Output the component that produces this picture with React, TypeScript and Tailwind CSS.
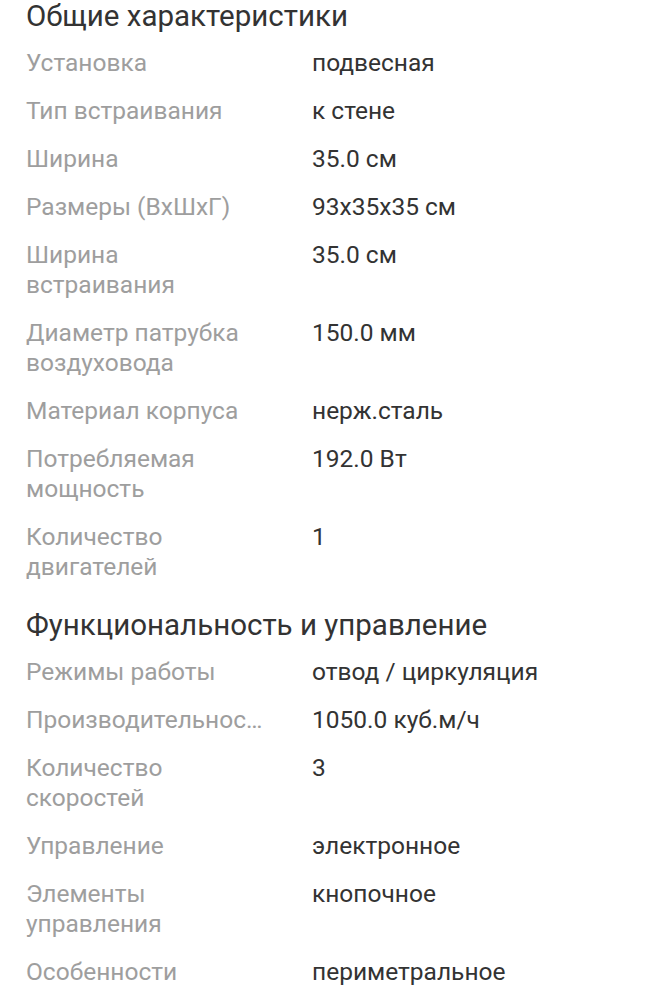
import React from 'react';

// ============================================
// Types
// ============================================

interface SpecRow {
  label: string;
  value: string;
  truncate?: boolean;
}

interface SpecSection {
  title: string;
  rows: SpecRow[];
}

// ============================================
// Data
// ============================================

const sections: SpecSection[] = [
  {
    title: 'Общие характеристики',
    rows: [
      { label: 'Установка', value: 'подвесная' },
      { label: 'Тип встраивания', value: 'к стене' },
      { label: 'Ширина', value: '35.0 см' },
      { label: 'Размеры (ВхШхГ)', value: '93x35x35 см' },
      { label: 'Ширина встраивания', value: '35.0 см' },
      { label: 'Диаметр патрубка воздуховода', value: '150.0 мм' },
      { label: 'Материал корпуса', value: 'нерж.сталь' },
      { label: 'Потребляемая мощность', value: '192.0 Вт' },
      { label: 'Количество двигателей', value: '1' },
    ],
  },
  {
    title: 'Функциональность и управление',
    rows: [
      { label: 'Режимы работы', value: 'отвод / циркуляция' },
      { label: 'Производительность', value: '1050.0 куб.м/ч', truncate: true },
      { label: 'Количество скоростей', value: '3' },
      { label: 'Управление', value: 'электронное' },
      { label: 'Элементы управления', value: 'кнопочное' },
      { label: 'Особенности', value: 'периметральное' },
    ],
  },
];

// ============================================
// Components
// ============================================

const SpecItem: React.FC<{ row: SpecRow }> = ({ row }) => (
  <div className="flex py-[9px] text-[24.5px] leading-[30px]">
    <div
      className={`w-[240px] shrink-0 text-[#9e9e9e] ${row.truncate ? 'truncate' : ''}`.trim()}
    >
      {row.label}
    </div>
    <div className="ml-[46px] text-[#333333]">{row.value}</div>
  </div>
);

const Section: React.FC<{ section: SpecSection; first?: boolean }> = ({ section, first }) => (
  <section className={first ? '' : 'mt-[18px]'}>
    <h2 className="h-[39px] pb-[7px] text-[29.5px] leading-[32px] text-[#333333]">
      {section.title}
    </h2>
    {section.rows.map((row) => (
      <SpecItem key={row.label} row={row} />
    ))}
  </section>
);

export default function App() {
  return (
    <div
      className="min-h-screen bg-white pl-[26px] pr-4"
      style={{ fontFamily: 'Roboto, "Noto Sans", sans-serif' }}
    >
      {sections.map((section, i) => (
        <Section key={section.title} section={section} first={i === 0} />
      ))}
    </div>
  );
}
